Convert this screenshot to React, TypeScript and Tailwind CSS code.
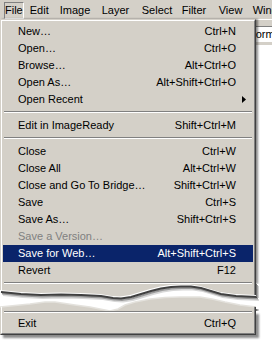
import React from "react";

type Item =
  | { sep: true }
  | {
      sep?: false;
      label: string;
      shortcut?: string;
      disabled?: boolean;
      hl?: boolean;
      arrow?: boolean;
    };

const topItems: Item[] = [
  { label: "New…", shortcut: "Ctrl+N" },
  { label: "Open…", shortcut: "Ctrl+O" },
  { label: "Browse…", shortcut: "Alt+Ctrl+O" },
  { label: "Open As…", shortcut: "Alt+Shift+Ctrl+O" },
  { label: "Open Recent", arrow: true },
  { sep: true },
  { label: "Edit in ImageReady", shortcut: "Shift+Ctrl+M" },
  { sep: true },
  { label: "Close", shortcut: "Ctrl+W" },
  { label: "Close All", shortcut: "Alt+Ctrl+W" },
  { label: "Close and Go To Bridge…", shortcut: "Shift+Ctrl+W" },
  { label: "Save", shortcut: "Ctrl+S" },
  { label: "Save As…", shortcut: "Shift+Ctrl+S" },
  { label: "Save a Version…", disabled: true },
  { label: "Save for Web…", shortcut: "Alt+Shift+Ctrl+S", hl: true },
  { label: "Revert", shortcut: "F12" },
];

function Row({ item }: { item: Item }) {
  if (item.sep) {
    return (
      <div className="h-[9px] pt-[3px] px-[1px]">
        <div className="h-[2px] border-t border-b border-t-[#808080] border-b-white" />
      </div>
    );
  }
  const color = item.hl
    ? "bg-[#0a246a] text-white"
    : item.disabled
    ? "text-[#808080]"
    : "text-black";
  return (
    <div
      className={`h-[17px] flex items-center justify-between pl-[15px] pr-[17px] relative ${color}`}
    >
      <span>{item.label}</span>
      {item.shortcut && <span>{item.shortcut}</span>}
      {item.arrow && (
        <svg
          width="4"
          height="7"
          viewBox="0 0 4 7"
          className="absolute right-[7px] top-[5px]"
        >
          <polygon points="0,0 4,3.5 0,7" fill="#000" />
        </svg>
      )}
    </div>
  );
}

const E1: [number, number][] = [
  [0, 6], [10, 7], [20, 8], [40, 9], [60, 8.5], [80, 9], [100, 10], [112, 12],
  [120, 12.5], [130, 11], [140, 8], [150, 5], [160, 2.5], [170, 1], [180, 0.5],
  [190, 0.5], [200, 2], [210, 5], [220, 8], [235, 10], [256, 11],
];
const E2: [number, number][] = [
  [0, 23], [15, 21.5], [30, 20], [45, 18], [55, 18], [65, 19.5], [75, 21], [90, 23],
  [100, 25], [110, 27], [118, 25], [125, 21], [135, 18], [150, 15], [165, 13.5],
  [180, 13], [200, 13], [212, 15], [225, 18], [240, 21], [256, 23],
];
const pts = (a: [number, number][]) => a.map(([x, y]) => `${x},${y}`).join(" ");

function Tear() {
  const upper = `M0,0 L256,0 ${E1.slice().reverse().map(([x, y]) => `L${x},${y}`).join(" ")} Z`;
  const lower = `M${E2.map(([x, y]) => `${x},${y}`).join(" L")} L256,27 L0,27 Z`;
  return (
    <svg width="259" height="27" viewBox="0 0 259 27" className="block">
      <defs>
        <clipPath id="up">
          <path d={upper} />
        </clipPath>
        <clipPath id="lo">
          <path d={lower} />
        </clipPath>
      </defs>
      <rect x="0" y="0" width="259" height="27" fill="#fff" />
      {/* shadow under upper piece */}
      <polyline points={pts(E1)} transform="translate(3,5)" fill="none" stroke="#d8d8d8" strokeWidth="2" />
      <polyline points={pts(E1)} transform="translate(2,3.5)" fill="none" stroke="#9a9a9a" strokeWidth="2" />
      <polyline points={pts(E1)} transform="translate(1,2)" fill="none" stroke="#404040" strokeWidth="2" />
      <rect x="256" y="0" width="1" height="13" fill="#707070" />
      <rect x="257" y="1" width="1" height="13" fill="#a0a0a0" />
      <rect x="258" y="2" width="1" height="12" fill="#d0d0d0" />
      {/* upper piece */}
      <path d={upper} fill="#d4d0c8" />
      <g clipPath="url(#up)">
        <rect x="1" y="0" width="1" height="27" fill="#fff" />
        <rect x="254" y="0" width="1" height="27" fill="#808080" />
        <rect x="255" y="0" width="1" height="27" fill="#404040" />
      </g>
      {/* lower piece */}
      <path d={lower} fill="#d4d0c8" />
      <polyline points={pts(E2)} fill="none" stroke="#e4e2dd" strokeWidth="1.5" />
      <g clipPath="url(#lo)">
        <rect x="1" y="0" width="1" height="27" fill="#fff" />
        <rect x="254" y="0" width="1" height="27" fill="#808080" />
        <rect x="255" y="0" width="1" height="27" fill="#404040" />
      </g>
      <rect x="256" y="25" width="1" height="2" fill="#707070" />
      <rect x="257" y="25" width="1" height="2" fill="#a0a0a0" />
      <rect x="258" y="25" width="1" height="2" fill="#d0d0d0" />
    </svg>
  );
}

export default function App() {
  const bar = [
    { t: "Edit", w: "w-[30px]" },
    { t: "Image", w: "w-[42px]" },
    { t: "Layer", w: "w-[40px]" },
    { t: "Select", w: "w-[40px]" },
    { t: "Filter", w: "w-[37px]" },
    { t: "View", w: "w-[34px]" },
    { t: "Window", w: "w-[50px]" },
  ];
  return (
    <div className="w-[272px] h-[348px] bg-white overflow-hidden font-['Liberation_Sans',Arial,sans-serif] text-[11px] leading-none text-black">
      {/* menu bar */}
      <div className="h-[19px] bg-[#d4d0c8] flex items-start pt-[2px] whitespace-nowrap">
        <div className="ml-[4px] w-[23px] h-[17px] flex items-center justify-center border border-t-[#808080] border-l-[#808080] border-r-white border-b-white">
          File
        </div>
        {bar.map((b) => (
          <div key={b.t} className={`${b.w} h-[17px] flex items-center pl-[6px] shrink-0`}>
            {b.t}
          </div>
        ))}
      </div>
      <div className="h-[1px] bg-white" />
      <div className="flex items-start">
        {/* menu */}
        <div className="w-[259px] shrink-0 flex flex-col z-10 -mt-[1px]">
          <div className="w-[256px] border-l border-t border-r border-l-[#d4d0c8] border-t-[#d4d0c8] border-r-[#404040] bg-[#d4d0c8] shadow-[2px_0_2px_rgba(0,0,0,0.45)]">
            <div className="border-l border-t border-r border-l-white border-t-white border-r-[#808080] px-[1px] pt-[2px]">
              {topItems.map((it, i) => (
                <Row key={i} item={it} />
              ))}
              <div className="h-[5px] pt-[3px] px-[1px]">
                <div className="h-[2px] border-t border-b border-t-[#808080] border-b-white" />
              </div>
            </div>
          </div>
          <Tear />
          <div className="w-[256px] border-l border-b border-r border-l-[#d4d0c8] border-b-[#404040] border-r-[#404040] bg-[#d4d0c8] shadow-[3px_3px_2px_rgba(0,0,0,0.45)]">
            <div className="border-l border-b border-r border-l-white border-b-[#808080] border-r-[#808080] px-[1px] pb-[1px]">
              <div className="px-[1px]">
                <div className="h-[2px] border-t border-b border-t-[#808080] border-b-white" />
              </div>
              <div className="pt-[2px]">
                <Row item={{ label: "Exit", shortcut: "Ctrl+Q" }} />
              </div>
            </div>
          </div>
        </div>
        {/* options bar remnant */}
        <div className="flex-1 -ml-[3px] min-w-0">
          <div className="bg-[#d4d0c8] pt-[6px] pb-[3px]">
            <div className="-ml-[10px] h-[16px] bg-white border-t border-t-[#808080] flex items-center pl-[3px] whitespace-nowrap">
              Format
            </div>
          </div>
        </div>
      </div>
    </div>
  );
}
